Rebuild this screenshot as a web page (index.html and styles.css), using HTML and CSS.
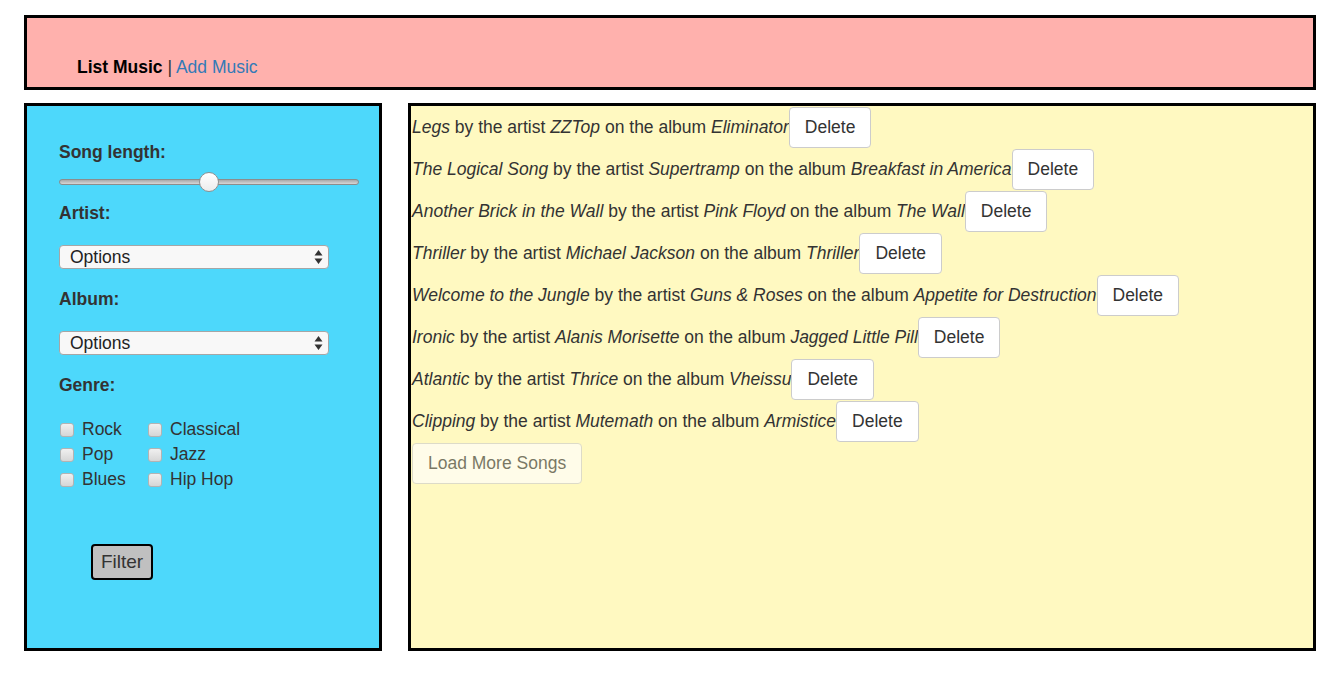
FILE: index.html
```html
<!DOCTYPE html>
<html>
<head>
<meta charset="utf-8">
<link rel="stylesheet" href="styles.css">
</head>
<body>
<div class="page">
  <header class="topbar">
    <nav class="nav"><b class="nav-current">List Music</b> <span class="sep">|</span> <a class="nav-link" href="#">Add Music</a></nav>
  </header>
  <div class="content">
    <aside class="sidebar">
      <div class="label label-first">Song length:</div>
      <input class="slider" type="range" min="0" max="100" value="50">
      <div class="label label-artist">Artist:</div>
      <div class="select-wrap">
        <select class="select"><option>Options</option></select>
        <svg class="select-arrows" width="9" height="16" viewBox="0 0 9 16"><path d="M4.5 1 L8.5 6.5 H0.5 Z M4.5 15 L8.5 9.5 H0.5 Z" fill="#333"/></svg>
      </div>
      <div class="label label-after-select">Album:</div>
      <div class="select-wrap">
        <select class="select"><option>Options</option></select>
        <svg class="select-arrows" width="9" height="16" viewBox="0 0 9 16"><path d="M4.5 1 L8.5 6.5 H0.5 Z M4.5 15 L8.5 9.5 H0.5 Z" fill="#333"/></svg>
      </div>
      <div class="label label-after-select">Genre:</div>
      <div class="genres">
        <label class="genre"><input class="check" type="checkbox"><span>Rock</span></label>
        <label class="genre"><input class="check" type="checkbox"><span>Classical</span></label>
        <label class="genre"><input class="check" type="checkbox"><span>Pop</span></label>
        <label class="genre"><input class="check" type="checkbox"><span>Jazz</span></label>
        <label class="genre"><input class="check" type="checkbox"><span>Blues</span></label>
        <label class="genre"><input class="check" type="checkbox"><span>Hip Hop</span></label>
      </div>
      <button class="filter-btn">Filter</button>
    </aside>
    <main class="main">
      <div class="song"><span class="desc"><i>Legs</i> by the artist <i>ZZTop</i> on the album <i>Eliminator</i></span><button class="btn">Delete</button></div>
      <div class="song"><span class="desc"><i>The Logical Song</i> by the artist <i>Supertramp</i> on the album <i>Breakfast in America</i></span><button class="btn">Delete</button></div>
      <div class="song"><span class="desc"><i>Another Brick in the Wall</i> by the artist <i>Pink Floyd</i> on the album <i>The Wall</i></span><button class="btn">Delete</button></div>
      <div class="song"><span class="desc"><i>Thriller</i> by the artist <i>Michael Jackson</i> on the album <i>Thriller</i></span><button class="btn">Delete</button></div>
      <div class="song"><span class="desc"><i>Welcome to the Jungle</i> by the artist <i>Guns &amp; Roses</i> on the album <i>Appetite for Destruction</i></span><button class="btn">Delete</button></div>
      <div class="song"><span class="desc"><i>Ironic</i> by the artist <i>Alanis Morisette</i> on the album <i>Jagged Little Pill</i></span><button class="btn">Delete</button></div>
      <div class="song"><span class="desc"><i>Atlantic</i> by the artist <i>Thrice</i> on the album <i>Vheissu</i></span><button class="btn">Delete</button></div>
      <div class="song"><span class="desc"><i>Clipping</i> by the artist <i>Mutemath</i> on the album <i>Armistice</i></span><button class="btn">Delete</button></div>
      <div class="song"><button class="btn btn-disabled" disabled>Load More Songs</button></div>
    </main>
  </div>
</div>
</body>
</html>
```

FILE: styles.css
```css
* { box-sizing: border-box; }
html, body { margin: 0; padding: 0; background: #fff; }
body {
  font-family: "Liberation Sans", Arial, Helvetica, sans-serif;
  font-size: 17.5px;
  color: #333;
}
.page {
  padding: 15px 26px 0 24px;
}
.topbar {
  height: 75px;
  border: 3px solid #000;
  background: #ffb1ad;
  padding: 39px 0 0 50px;
}
.nav { line-height: 20px; }
.nav-current { color: #000; font-weight: bold; }
.sep { color: #333; }
.nav-link { color: #337ab7; text-decoration: none; }

.content {
  display: flex;
  gap: 26px;
  margin-top: 13px;
  height: 548px;
}
.sidebar {
  width: 358px;
  flex: none;
  border: 3px solid #000;
  background: #4dd8fb;
  padding: 36px 0 0 32px;
}
.label {
  font-weight: bold;
  line-height: 20px;
  height: 21px;
  padding-top: 1px;
}
.label-first { padding-top: 0; height: 20px; }
.label-artist { margin-top: 10px; }
.label-after-select { margin-top: 19px; }

.slider {
  -webkit-appearance: none;
  appearance: none;
  display: block;
  width: 300px;
  height: 20px;
  margin: 10px 0 0 0;
  padding: 0;
  background: transparent;
}
.slider::-webkit-slider-runnable-track {
  height: 6px;
  border: 1px solid #8c8c8c;
  border-radius: 3px;
  background: linear-gradient(#a9a9a9, #d6d6d6);
}
.slider::-webkit-slider-thumb {
  -webkit-appearance: none;
  width: 20px;
  height: 20px;
  margin-top: -8px;
  border-radius: 50%;
  border: 1px solid #8f8f8f;
  background: linear-gradient(#ffffff, #ececec);
}

.select-wrap {
  position: relative;
  width: 270px;
  height: 24px;
  margin-top: 22px;
}
.select {
  -webkit-appearance: none;
  appearance: none;
  width: 270px;
  height: 24px;
  border: 1px solid #a6a6a6;
  border-radius: 4px;
  background: #f8f8f8;
  font-family: "Liberation Sans", Arial, sans-serif;
  font-size: 17.5px;
  color: #222;
  padding: 0 0 0 10px;
  margin: 0;
}
.select-arrows {
  position: absolute;
  right: 6px;
  top: 4px;
  pointer-events: none;
}

.genres {
  display: grid;
  grid-template-columns: 88px auto;
  grid-auto-rows: 25px;
  margin-top: 22px;
  width: 200px;
}
.genre {
  display: flex;
  align-items: center;
  gap: 8px;
  line-height: 25px;
}
.check {
  -webkit-appearance: none;
  appearance: none;
  width: 14px;
  height: 14px;
  margin: 0 0 0 1px;
  border: 1px solid #b3b3b3;
  border-radius: 3px;
  background: linear-gradient(#f0f0f0, #d6d6d6);
  flex: none;
}

.filter-btn {
  display: block;
  margin: 52px 0 0 32px;
  width: 62px;
  height: 36px;
  border: 2px solid #000;
  border-radius: 4px;
  background: #c0c0c0;
  color: #333;
  font-family: "Liberation Sans", Arial, sans-serif;
  font-size: 19px;
  padding: 0 0 1px 0;
}

.main {
  flex: 1;
  border: 3px solid #000;
  background: #fff9c1;
  padding: 1px 0 0 1px;
}
.song {
  display: flex;
  align-items: baseline;
  height: 42px;
}
.desc { white-space: nowrap; }
.btn {
  font-family: "Liberation Sans", Arial, sans-serif;
  font-size: 17.5px;
  line-height: 25px;
  padding: 7px 15px;
  border: 1px solid #ccc;
  border-radius: 4px;
  background: #fff;
  color: #333;
  margin: 0;
}
.btn-disabled {
  opacity: 0.65;
  color: #333;
}
```
